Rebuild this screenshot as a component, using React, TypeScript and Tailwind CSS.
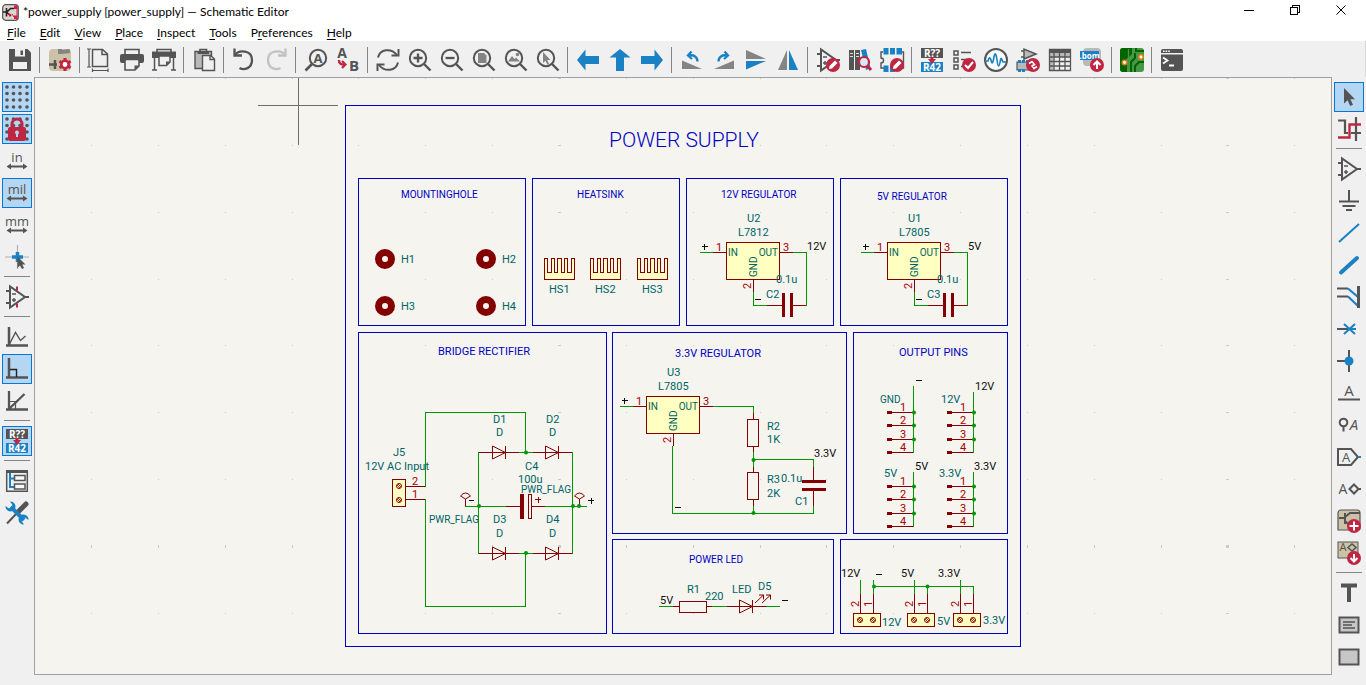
import React from "react";

const K = "#545454";
const B = "#1a81c4";
const R = "#bf2641";
const G = "#848484";

type Item = { name: string; art: React.ReactNode; on?: boolean } | null;

function Icon({ children }: { children: React.ReactNode }) {
  return (
    <svg width="24" height="24" viewBox="0 0 24 24" fill="none" stroke={K} strokeWidth="2" className="shrink-0 overflow-visible" aria-hidden="true">
      {children}
    </svg>
  );
}

const iconFont = "font-['Open_Sans','Noto_Sans',sans-serif] font-bold";

function Glyph({ x, y, size, fill = K, children, light, italic, anchor = "middle" }: { x: number; y: number; size: number; fill?: string; children: string; light?: boolean; italic?: boolean; anchor?: "start" | "middle" }) {
  return (
    <text x={x} y={y} fontSize={size} fill={fill} stroke="none" textAnchor={anchor} fontStyle={italic ? "italic" : "normal"} className={light ? "font-['Open_Sans','Noto_Sans',sans-serif] font-medium" : iconFont}>
      {children}
    </text>
  );
}

function Lens({ children }: { children?: React.ReactNode }) {
  return (
    <>
      <circle cx="10" cy="10" r="8.2" />
      <path d="M16 16L22.5 22.5" strokeWidth="2.4" />
      {children}
    </>
  );
}

function Badge({ children, x = 17, y = 17 }: { children: React.ReactNode; x?: number; y?: number }) {
  return (
    <>
      <circle cx={x} cy={y} r="7" fill={R} stroke="none" />
      <g stroke="#fff" strokeWidth="2" transform={`translate(${x - 17} ${y - 17})`}>{children}</g>
    </>
  );
}

const pencil = <path d="M13 21L13.500 18L19 12.500L21.500 15L16 20.500Z" fill="#fff" stroke="none" />;

const annotate = (
  <>
    <rect x="1" y="0" width="22" height="10" fill={K} stroke="none" />
    <Glyph x={12} y={9} size={10} fill="#fff">R??</Glyph>
    <rect x="1" y="14" width="22" height="10" fill={B} stroke="none" />
    <Glyph x={12} y={23} size={10} fill="#fff">R42</Glyph>
    <path d="M10.5 9h3v2h2.5L12 16L8 11h2.500z" fill={R} stroke="none" />
  </>
);

const opamp = (
  <>
    <path d="M5 1.500V22.500L20 12ZM1 6H5M1 18H5M20 12H24" />
    <path d="M7 9H11M7 15H11M9 13V17" strokeWidth="1.500" />
  </>
);

const dots = [2, 8.5, 15, 22].flatMap((x) => [2, 8.5, 15, 22].map((y) => <circle key={`${x}-${y}`} cx={x} cy={y} r="1.8" fill={K} stroke="none" />));

const unitArrow = (
  <>
    <path d="M4 17.500H20" />
    <path d="M1.500 17.500L6 14.500V20.500ZM22.500 17.500L18 14.500V20.500Z" fill={K} stroke="none" />
  </>
);

const pointer = "M7 3V18.500L10.600 15.300L13.200 21L16 19.700L13.400 14.300H18Z";

const topItems: Item[] = [
  { name: "Save", art: <><path d="M1 1H19.500L23 4.500V23H1Z" fill={K} stroke="none" /><path d="M7 1H17V8.500H7ZM5 14H19V21H5Z" fill="#f0f0f0" stroke="none" /><path d="M12.500 2.500H15V7H12.500Z" fill={K} stroke="none" /></> },
  null,
  { name: "Schematic Setup", art: <><rect x="1" y="1" width="22" height="22" rx="4" fill="#ccc2a6" stroke="none" /><path d="M12 1V6M14 4L22 3" stroke={G} strokeWidth="4" /><path d="M1 16.500H9M7 12V21" strokeWidth="2.500" /><path d="M17 10V23M11.400 13.200L22.600 19.800M22.600 13.200L11.400 19.800" stroke={R} strokeWidth="3" /><circle cx="17" cy="16.500" r="3.700" stroke={R} strokeWidth="2.600" fill="#fff" /></> },
  null,
  { name: "Page Settings", art: <><path d="M4.500 1.500H14.500L19.500 6V18.500H4.500ZM14 2V6.500H19" strokeWidth="1.500" /><path d="M1 1V19M-1 1H3M-1 19H3M4.500 22.500H20M4.500 20.500V24M20 20.500V24" strokeWidth="1.200" /></> },
  { name: "Print", art: <><path d="M5 7V1.500H19V7" strokeWidth="1.600" /><rect x="0" y="6" width="24" height="9" rx="2" fill={K} stroke="none" /><path d="M5 11.500H19V18L15 22H5Z" fill="#f0f0f0" strokeWidth="1.600" /><path d="M19 17.500H14.500V22Z" fill={K} stroke="none" /></> },
  { name: "Plot", art: <><path d="M5 4V1.500H19V4" strokeWidth="1.600" /><path d="M0 3.500H24V10H0Z" fill={K} stroke="none" /><path d="M2.500 9V22M21.500 9V22M0 22H5M19 22H24" strokeWidth="1.500" /><path d="M7 8H18V14L14.500 17.500H7Z" fill="#f0f0f0" strokeWidth="1.500" /><path d="M18 13.500H14V17.500Z" fill={K} stroke="none" /></> },
  null,
  { name: "Paste", art: <><path d="M3 3.500H19.500V20.500H3Z" fill="#b9b9b9" strokeWidth="1.400" /><path d="M8 4V1.500H14.500V4" strokeWidth="1.600" /><path d="M5.500 3H17V6H5.500Z" fill={K} stroke="none" /><path d="M10.500 7.500H18.500L22.500 11V22.500H10.500Z" fill="#f0f0f0" strokeWidth="1.400" /><path d="M18 7.500V11.500H22.500" strokeWidth="1.400" /></> },
  null,
  { name: "Undo", art: <><path d="M3 7C7 1.500 20 2 20 12C20 20.500 12 22.500 7.500 20" strokeWidth="2.300" /><path d="M2.500 0.500V7.500H10" strokeWidth="2.300" /></> },
  { name: "Redo", art: <><path d="M21 7C17 1.500 4 2 4 12C4 20.500 12 22.500 16.500 20" stroke="#c2c2c2" strokeWidth="2.300" /><path d="M21.500 0.500V7.500H14" stroke="#c2c2c2" strokeWidth="2.300" /></> },
  null,
  { name: "Find", art: <><circle cx="14" cy="10" r="8.200" /><path d="M8 16L1.500 22.500" strokeWidth="2.600" /><Glyph x={14} y={15} size={13}>A</Glyph></> },
  { name: "Replace", art: <><Glyph x={6} y={10} size={14}>A</Glyph><Glyph x={18} y={23} size={15}>B</Glyph><path d="M3 12C3 16 5 16.500 8 16.500" stroke={R} strokeWidth="2.500" /><path d="M6 13L9.500 16.500L6 20" stroke={R} strokeWidth="2.200" /></> },
  null,
  { name: "Refresh", art: <><path d="M2 9.500C4 1 15 -0.500 21 7M22 14.500C20 23 9 24.500 3 17" /><path d="M22.500 1V7.500H15.500M1.500 23V16.500H8.500" /></> },
  { name: "Zoom In", art: <Lens><path d="M5.500 10H14.500M10 5.500V14.500" strokeWidth="2.300" /></Lens> },
  { name: "Zoom Out", art: <Lens><path d="M5.500 10H14.500" strokeWidth="2.300" /></Lens> },
  { name: "Zoom to Fit", art: <Lens><path d="M6 5H12L14.500 7.500V15H6Z" fill={G} stroke="none" /></Lens> },
  { name: "Zoom to Objects", art: <Lens><path d="M4 13.500L8 8L10.500 11L12 9.500L16 13.500Z" fill={G} stroke="none" /><circle cx="13.500" cy="6.500" r="1.800" fill={G} stroke="none" /></Lens> },
  { name: "Zoom to Selection", art: <Lens><path d="M7 4V15L9.500 12.800L11.300 16.500L13 15.700L11.300 12H14.500Z" fill={G} stroke="none" /></Lens> },
  null,
  { name: "Navigate Back", art: <path d="M1 12L9.500 1.500V8H23V16H9.500V22.500Z" fill={B} stroke="none" /> },
  { name: "Navigate Up", art: <path d="M12 1L22.500 9.500H16V23H8V9.500H1.500Z" fill={B} stroke="none" /> },
  { name: "Navigate Forward", art: <path d="M23 12L14.500 1.500V8H1V16H14.500V22.500Z" fill={B} stroke="none" /> },
  null,
  { name: "Rotate Counterclockwise", art: <><path d="M2 12.500V21H22Z" fill={G} stroke="none" /><path d="M17.500 13.500C17.500 9 14 6.500 9 7.500" stroke={B} strokeWidth="2.300" /><path d="M11.500 3.500L8 7.500L12 11" stroke={B} strokeWidth="2.300" /></> },
  { name: "Rotate Clockwise", art: <><path d="M22 12.500V21H2Z" fill={G} stroke="none" /><path d="M6.500 13.500C6.500 9 10 6.500 15 7.500" stroke={B} strokeWidth="2.300" /><path d="M12.500 3.500L16 7.500L12 11" stroke={B} strokeWidth="2.300" /></> },
  { name: "Mirror Vertically", art: <><path d="M2 2V11H22Z" fill={G} stroke="none" /><path d="M2 21.500V13H22Z" fill={B} stroke="none" /></> },
  { name: "Mirror Horizontally", art: <><path d="M2 22H11V2Z" fill={G} stroke="none" /><path d="M22 22H13V2Z" fill={B} stroke="none" /></> },
  null,
  { name: "Symbol Editor", art: <>{opamp}<Badge>{pencil}</Badge></> },
  { name: "Symbol Library Browser", art: <><path d="M1 2H6V22H1ZM7 2H12V22H7Z" fill={K} stroke="none" /><path d="M2 5.500H5M2 8.500H5M8 5.500H11M8 8.500H11" stroke="#ddd" strokeWidth="1.200" /><path d="M13 2L18 1L22.500 20L18 22Z" fill={B} stroke="none" /><circle cx="16" cy="14" r="5" fill="#dbe9f4" stroke={R} strokeWidth="2.200" /><path d="M19.500 18L23 22" stroke={R} strokeWidth="3" /></> },
  { name: "Footprint Editor", art: <><path d="M3 4H1V10A2.500 2.500 0 0 1 1 15V20H4M21 4H23.500V20H21" strokeWidth="1.400" /><path d="M3.500 0H8.500V6.500H3.500ZM10 0H15V6.500H10ZM16.500 0H22V6.500H16.500ZM3.500 17.500H8.500V24H3.500ZM10 17.500H15V24H10Z" fill={B} stroke="none" /><Badge>{pencil}</Badge></> },
  null,
  { name: "Annotate Schematic", art: annotate },
  { name: "Electrical Rules Checker", art: <><path d="M2 3H6V7H2ZM2 10H6V14H2ZM2 17H6V21H2ZM9 4.500H19M9 11.500H15M9 18.500H12" strokeWidth="1.500" /><Badge><path d="M13 17L16 20L21 14" /></Badge></> },
  { name: "Simulator", art: <><circle cx="12" cy="12" r="11" fill="#fafafa" /><path d="M1 13H4C5 9 6 9 7 12C8 17 9 15 10 9C11 4 12 5 13 12C14 20 15 20 16.500 12C17.500 8 18 13 19 14H22" stroke={B} strokeWidth="1.600" /></> },
  { name: "Assign Footprints", art: <><path d="M8 1V11L20 6ZM5 3H8M5 9H8" fill="#b9b9b9" strokeWidth="1.500" /><path d="M1 14H14V22H1Z" fill="#b9b9b9" stroke={K} strokeWidth="1.200" /><path d="M2 12H5V15H2ZM6 12H9V15H6ZM10 12H13V15H10ZM2 21H5V24H2ZM6 21H9V24H6Z" fill={B} stroke="none" /><Badge><path d="M13 15.500L16 13.500L18.500 16.500L15.500 18.500M21 18.500L18 20.500L16 17" strokeWidth="1.600" /></Badge></> },
  { name: "Bulk Edit Fields", art: <><path d="M1 1H23V5H1Z" fill={K} stroke="none" /><path d="M1 5H23V9H1ZM1 9H5V23H1Z" fill="#b9b9b9" stroke="none" /><path d="M1.500 1.500H22.500V22.500H1.500ZM1 9H23M1 13.500H23M1 18H23M6 5V22M11.500 5V22M17 5V22" strokeWidth="1.300" /></> },
  { name: "Export BOM", art: <><rect x="3" y="0" width="18" height="18" rx="4" fill="#b9b9b9" stroke="none" /><rect x="0" y="3" width="19" height="9" fill={B} stroke="none" /><Glyph x={9.5} y={10.5} size={8} fill="#fff">.bom</Glyph><Badge><path d="M17 21V14M13.500 17L17 13.500L20.500 17" /></Badge></> },
  null,
  { name: "PCB Editor", art: <><rect x="0" y="0" width="24" height="24" rx="3" fill="#489648" stroke="none" /><path d="M3 0H12V6L7 11V24H3A3 3 0 0 1 0 21V3A3 3 0 0 1 3 0Z" fill="#006400" stroke="none" /><path d="M11 24V14L15 10V5M15 24V18L19 14H24M16 0V3H24" stroke="#006400" strokeWidth="2" /><path d="M4 14.500L8.500 10V1" stroke="#489648" strokeWidth="1.300" /><circle cx="4.500" cy="14.500" r="2.200" fill="#fff" stroke="#e8820e" strokeWidth="1.500" /><circle cx="21" cy="9" r="2.200" fill="#fff" stroke="#e8820e" strokeWidth="1.500" /></> },
  null,
  { name: "Scripting Console", art: <><path d="M1 3A2 2 0 0 1 3 1H21A2 2 0 0 1 23 3V5H1ZM1 6.500H23V21A2 2 0 0 1 21 23H3A2 2 0 0 1 1 21Z" fill={K} stroke="none" /><path d="M3 3.200H10" stroke="#fff" strokeWidth="1.500" strokeDasharray="1.600 1" /><path d="M3 9.500L7.500 12.500L3 15.500M9 17.500H14" stroke="#fff" strokeWidth="1.800" /></> },
];

const leftItems: Item[] = [
  { name: "Show Grid", on: true, art: dots },
  { name: "Grid Overrides", on: true, art: <>{dots}<path d="M7 11V7A5 5 0 0 1 17 7V11" stroke={R} strokeWidth="3" /><rect x="3" y="10" width="18" height="14" rx="2" fill={R} stroke="none" /><circle cx="12" cy="15.500" r="2" fill="#b4d6f2" stroke="none" /><path d="M12 16V20" stroke="#b4d6f2" /></> },
  { name: "Inches", art: <><Glyph x={12} y={13} size={13} light>in</Glyph>{unitArrow}</> },
  { name: "Mils", on: true, art: <><Glyph x={12} y={13} size={13} light>mil</Glyph>{unitArrow}</> },
  { name: "Millimeters", art: <><Glyph x={12} y={13} size={13} light>mm</Glyph>{unitArrow}</> },
  { name: "Full-Window Crosshairs", art: <><path d="M0 12H24M12.500 0V24" stroke="#b0b0b0" strokeWidth="1.200" /><path d="M7 12H18M12.500 7V17" stroke={B} strokeWidth="3.500" /><path d="M12.500 11.500V23L15 20.500L17 24L19 23L17.300 19.500H20.500Z" fill={K} stroke="none" /></> },
  null,
  { name: "Show Hidden Pins", art: <>{opamp}<path d="M12 1.500V5.500M12 18.500V22.500" stroke={R} strokeWidth="2" /></> },
  null,
  { name: "Free Angle Lines", art: <><path d="M4 2V21.500M1 20.500H23" strokeWidth="2.500" /><path d="M4 20L10.500 7.500L15.500 15.500L20.500 11" strokeWidth="1.400" /></> },
  { name: "Right Angle Lines", on: true, art: <><path d="M4 1V21.500M1 20.500H23" strokeWidth="2.500" /><path d="M5 12.500H11.500V20" stroke="#222" strokeWidth="1.400" /></> },
  { name: "45 Degree Lines", art: <><path d="M4 2V21.500M1 20.500H23M4 20L19.500 5" strokeWidth="2.300" /><path d="M5 12.500H10.500V20" strokeWidth="1.200" /></> },
  null,
  { name: "Annotate Automatically", on: true, art: annotate },
  null,
  { name: "Hierarchy Navigator", art: <><path d="M1 1H23V4H1Z" fill={K} stroke="none" /><path d="M1.700 2V22.300H22.300V2" strokeWidth="1.500" /><path d="M5 4V18H9M5 9.500H9" stroke={B} /><path d="M9.500 6.500H20V11.500H9.500ZM9.500 15H20V20H9.500Z" strokeWidth="1.500" fill="#f8f8f8" /></> },
  { name: "Properties Manager", art: <><path d="M2 22.500L13 11" strokeWidth="2" /><path d="M14 10L21 3" strokeWidth="5" strokeLinecap="round" /><path d="M6 6L19 19" stroke={B} strokeWidth="4" /><path d="M5 0.500A5 5 0 1 1 0.500 5L4 7.500L7.500 4ZM19 23.500A5 5 0 1 1 23.500 19L20 16.500L16.500 20Z" fill={B} stroke="none" /></> },
];

const sheet = <path d="M1 4A3 3 0 0 1 4 1H20A3 3 0 0 1 23 4V19A2 2 0 0 1 21 21H1Z" fill="#ccc2a6" strokeWidth="1.200" />;

const rightItems: Item[] = [
  { name: "Select", on: true, art: <path d={pointer} fill={K} stroke="none" /> },
  { name: "Highlight Nets", art: <><path d="M1 3.500H8V16H11M19 0V24M14 16H24" strokeWidth="2.200" /><path d="M1 20.500H12.500V7.500H24" stroke={R} strokeWidth="2.400" /></> },
  null,
  { name: "Place Symbols", art: opamp },
  { name: "Place Power", art: <><path d="M12 1V12" /><path d="M2 12.500H22M5.500 17H18.500M9 21H15" /></> },
  { name: "Draw Wires", art: <path d="M2 21L22 3" stroke={B} /> },
  { name: "Draw Buses", art: <path d="M4 19.500L20 5" stroke={B} strokeWidth="4" strokeLinecap="round" /> },
  { name: "Wire to Bus Entries", art: <><path d="M0 3.500H11M0 11.500H11" /><path d="M11 3.500L21 12M11 11.500L21 21" stroke={B} strokeWidth="2.200" /><path d="M21.500 1V23" strokeWidth="3" /></> },
  { name: "No-Connect Flags", art: <><path d="M0 12H12" /><path d="M7 7L18 17M7 17L18 7M12 12H19" stroke={B} strokeWidth="2" /></> },
  { name: "Junctions", art: <><path d="M0 12H12M12 1V23" /><circle cx="12" cy="12" r="4.500" fill={B} stroke="none" /></> },
  { name: "Net Labels", art: <><Glyph x={12} y={15} size={15} light>A</Glyph><path d="M1 18.500H23" /></> },
  { name: "Net Class Directives", art: <><circle cx="6.500" cy="9.500" r="3.800" /><path d="M6.500 13V18.500" /><Glyph x={17} y={17} size={15} light italic>A</Glyph></> },
  { name: "Global Labels", art: <><path d="M1 4H14L21 12L14 20H1Z" /><path d="M21 12H24" stroke={B} /><Glyph x={9} y={17} size={13} light>A</Glyph></> },
  { name: "Hierarchical Labels", art: <><Glyph x={6} y={17} size={14} light>A</Glyph><path d="M12.500 12L17 7.500L21.500 12L17 16.500ZM21.500 12H24" /></> },
  { name: "Draw Sheets", art: <>{sheet}<path d="M2 9H7M8 4V15M8 8L13 4H23M8 12L12 16" /><Badge><path d="M17 12.500V21.500M12.500 17H21.500" /></Badge></> },
  { name: "Import Sheet Pins", art: <><rect x="1" y="1" width="20" height="16" fill="#ccc2a6" strokeWidth="1" /><Glyph x={6} y={10} size={11} light>A</Glyph><path d="M11 6.500L15 3L19 6.500L15 10Z" strokeWidth="1.600" /><Badge><path d="M17 13V20M13.500 17L17 20.500L20.500 17" /></Badge></> },
  null,
  { name: "Text", art: <path d="M4 4.500H20M12 4V21" strokeWidth="4" /> },
  { name: "Text Boxes", art: <><rect x="2.500" y="4.500" width="19" height="15" fill="#c6c6c6" /><path d="M6 9H18M6 12H15M6 15H18" strokeWidth="1.300" /></> },
  { name: "Rectangles", art: <rect x="2.500" y="4.500" width="19" height="15" fill="#c6c6c6" /> },
];

function SideBar({ items, label }: { items: Item[]; label: string }) {
  return (
    <aside aria-label={label} className="flex w-[34px] shrink-0 flex-col items-center bg-[#f0f0f0] pt-1">
      {items.map((it, i) =>
        it ? (
          <div key={i} className="flex h-8 shrink-0 items-center">
            <button type="button" aria-label={it.name} aria-pressed={!!it.on} className={it.on ? "flex size-[30px] items-center justify-center border border-[#0078d7] bg-[#b4d6f2]" : "flex size-[30px] items-center justify-center"}>
              <Icon>{it.art}</Icon>
            </button>
          </div>
        ) : (
          <div key={i} className="flex h-2 w-[26px] shrink-0 items-start pt-[3px]">
            <div className="h-px w-full bg-[#848484]" />
          </div>
        ),
      )}
    </aside>
  );
}

const TEAL = "#006464";
const PIN = "#a90000";
const INK = "#0f0f0f";
const BLUE = "#0000c2";
const WIRE = "#009600";
const PART = "#840000";
const BODY = "#ffffc2";

function T({ x, y, c = TEAL, s = 11, rot, end, children }: { x: number; y: number; c?: string; s?: number; rot?: boolean; end?: boolean; children: string }) {
  return (
    <text x={x} y={y} fill={c} fontSize={s} textAnchor={end ? "end" : "start"} transform={rot ? `rotate(-90 ${x} ${y})` : undefined}>
      {children}
    </text>
  );
}

const Wire = ({ d }: { d: string }) => <path d={d} stroke={WIRE} fill="none" shapeRendering="crispEdges" />;
const Part = ({ d }: { d: string }) => <path d={d} stroke={PART} fill="none" shapeRendering="crispEdges" />;
const Dot = ({ x, y }: { x: number; y: number }) => <circle cx={x} cy={y} r="2" fill={WIRE} />;
const Ink = ({ d }: { d: string }) => <path d={d} stroke={INK} fill="none" shapeRendering="crispEdges" />;
const Frame = ({ x, y, w, h }: { x: number; y: number; w: number; h: number }) => (
  <rect x={x + 0.5} y={y + 0.5} width={w} height={h} stroke={BLUE} fill="none" shapeRendering="crispEdges" />
);

function Regulator({ x, y, name, part }: { x: number; y: number; name: string; part: string }) {
  return (
    <g transform={`translate(${x} ${y})`}>
      <rect x="0.500" y="0.500" width="53" height="37" fill={BODY} stroke={PART} shapeRendering="crispEdges" />
      <Wire d="M-26 10.500H-13" />
      <Part d="M-13 10.500H0M54 10.500H67M27.500 38V50" />
      <Ink d="M-24 4.500H-18M-21.500 2V8" />
      <T x={-10} y={9} c={PIN}>1</T>
      <T x={57} y={9} c={PIN}>3</T>
      <T x={25} y={47} c={PIN} rot>2</T>
      <T x={2} y={14} s={10}>IN</T>
      <T x={52} y={14} s={10} end>OUT</T>
      <T x={31} y={35} s={10} rot>GND</T>
      <T x={21} y={-20}>{name}</T>
      <T x={12} y={-6}>{part}</T>
    </g>
  );
}

function RegulatorTail({ x, cap, net }: { x: number; cap: string; net: string }) {
  return (
    <g transform={`translate(${x} 0)`}>
      <Wire d="M67 252.500H80.500V305.500M27.500 292V305.500H41" />
      <Part d="M41 305.500H56M67 305.500H80" />
      <rect x="56" y="293" width="3" height="24" fill={PART} />
      <rect x="64" y="293" width="3" height="24" fill={PART} />
      <Ink d="M29 299.500H35" />
      <T x={50} y={283}>0.1u</T>
      <T x={40} y={298}>{cap}</T>
      <T x={81} y={250} c={INK}>{net}</T>
    </g>
  );
}

function Header({ x, y, top }: { x: number; y: number; top: number }) {
  return (
    <g>
      {[0, 13, 27, 40].map((dy, i) => (
        <g key={dy}>
          <Part d={`M${x - 26} ${y + dy + 0.5}H${x}`} />
          <rect x={x - 26} y={y + dy - 1} width="5" height="3" fill={PART} />
          <T x={x - 13} y={y + dy - 1} c={PIN}>{String(i + 1)}</T>
        </g>
      ))}
      <Wire d={`M${x + 0.5} ${top}V${y + 41}`} />
      {[0, 13, 27].map((dy) => <Dot key={dy} x={x + 1} y={y + dy + 0.5} />)}
    </g>
  );
}

function Screw({ x, y }: { x: number; y: number }) {
  return (
    <g stroke={PART} fill="none">
      <circle cx={x} cy={y} r="2.500" />
      <path d={`M${x - 2} ${y - 1}L${x + 1} ${y + 2}M${x - 1} ${y - 2}L${x + 2} ${y + 1}`} strokeWidth="0.800" />
    </g>
  );
}

function Terminal({ x }: { x: number }) {
  return (
    <g>
      <rect x={x + 0.5} y="613.500" width="27" height="13" fill={BODY} stroke={PART} shapeRendering="crispEdges" />
      <Screw x={x + 7} y={620} />
      <Screw x={x + 20} y={620} />
      <Part d={`M${x + 7.5} 594V613M${x + 20.5} 594V613`} />
      <T x={x + 6} y={607} c={PIN} rot>2</T>
      <T x={x + 19} y={607} c={PIN} rot>1</T>
    </g>
  );
}

function Diode({ x, y }: { x: number; y: number }) {
  return (
    <g stroke={PART} fill="none">
      <path d={`M${x + 0.5} ${y - 6}V${y + 7}L${x + 13.5} ${y + 0.5}Z`} />
      <path d={`M${x + 13.5} ${y - 6}V${y + 7}M${x} ${y + 0.5}H${x + 14}`} shapeRendering="crispEdges" />
    </g>
  );
}

const Resistor = ({ x, y }: { x: number; y: number }) => <rect x={x + 0.5} y={y + 0.5} width="11" height="27" fill="none" stroke={PART} shapeRendering="crispEdges" />;
const Flag = ({ x, y }: { x: number; y: number }) => <path d={`M${x} ${y}V${y - 7}L${x - 5} ${y - 10}Q${x} ${y - 16} ${x + 5} ${y - 10}L${x} ${y - 7}`} fill="none" stroke={PART} />;

const gridX = Array.from({ length: 19 }, (_, i) => Math.round(91.5 + i * 66.85 - 0.5));
const gridY = Array.from({ length: 9 }, (_, i) => Math.round(78 + i * 66.85));

function Schematic() {
  return (
    <svg role="img" aria-label="Power supply schematic" className="block h-full w-full font-['Roboto','Liberation_Sans',sans-serif]">
      <g transform="translate(-35 -78)">
        {gridX.flatMap((x, i) =>
          gridY.map((y, j) => (
            <rect key={`${i}-${j}`} x={i % 10 === 7 ? x - 1 : x} y={j === 7 ? y - 1 : y} width={i % 10 === 7 ? 3 : 1} height={j === 7 ? 3 : 1} fill="#cbcac6" />
          )),
        )}
        <path d="M258 105.500H338M298.500 78V145" stroke="#6e6e6c" shapeRendering="crispEdges" />

        <Frame x={345} y={105} w={675} h={541} />
        <Frame x={358} y={178} w={167} h={147} />
        <Frame x={532} y={178} w={147} h={147} />
        <Frame x={686} y={178} w={147} h={147} />
        <Frame x={840} y={178} w={167} h={147} />
        <Frame x={358} y={332} w={248} h={301} />
        <Frame x={612} y={332} w={234} h={201} />
        <Frame x={853} y={332} w={154} h={201} />
        <Frame x={612} y={539} w={221} h={94} />
        <Frame x={840} y={539} w={167} h={94} />

        <text x="609" y="147" fontSize="21" fill={BLUE} className="font-light">POWER SUPPLY</text>
        <T x={401} y={198} c={BLUE} s={10}>MOUNTINGHOLE</T>
        <T x={577} y={198} c={BLUE} s={10}>HEATSINK</T>
        <T x={721} y={198} c={BLUE} s={10}>12V REGULATOR</T>
        <T x={877} y={200} c={BLUE} s={10}>5V REGULATOR</T>
        <T x={438} y={355} c={BLUE} s={11}>BRIDGE RECTIFIER</T>
        <T x={675} y={357} c={BLUE} s={11}>3.3V REGULATOR</T>
        <T x={899} y={356} c={BLUE} s={11}>OUTPUT PINS</T>
        <T x={689} y={563} c={BLUE} s={10}>POWER LED</T>

        {[[385, 259, "H1"], [486, 259, "H2"], [385, 306, "H3"], [486, 306, "H4"]].map(([x, y, n]) => (
          <g key={n}>
            <circle cx={x} cy={y} r="6.500" fill="none" stroke={PART} strokeWidth="7" />
            <T x={Number(x) + 16} y={Number(y) + 4}>{String(n)}</T>
          </g>
        ))}
        {[544, 590, 637].map((x, i) => (
          <g key={x}>
            <path d={`M${x + 0.5} 258.500h3v14h4v-14h3v14h3v-14h4v14h3v-14h3v14h4v-14h3v21h-30z`} fill={BODY} stroke={PART} shapeRendering="crispEdges" />
            <T x={x + 5} y={293}>{`HS${i + 1}`}</T>
          </g>
        ))}

        <Regulator x={726} y={242} name="U2" part="L7812" />
        <RegulatorTail x={726} cap="C2" net="12V" />
        <Regulator x={887} y={242} name="U1" part="L7805" />
        <RegulatorTail x={887} cap="C3" net="5V" />

        <Wire d="M425.500 487V412.500H525.500V452.500M425.500 499V606.500H525.500V553.500M478.500 452V554M572.500 452V554M519 452.500H533M519 553.500H533M465 506.500H506M545 506.500H587" />
        <Part d="M406 486.500H425M406 499.500H425M479 452.500H519M533 452.500H572M479 553.500H519M533 553.500H572M506 506.500H520M532 506.500H545M535 499.500H541M538.500 497V503" />
        <rect x="392.500" y="479.500" width="13" height="27" fill={BODY} stroke={PART} shapeRendering="crispEdges" />
        <Screw x={399} y={486} />
        <Screw x={399} y={500} />
        <Diode x={492} y={452} />
        <Diode x={545} y={452} />
        <Diode x={492} y={553} />
        <Diode x={545} y={553} />
        <rect x="520" y="494" width="4" height="25" fill={PART} />
        <rect x="528.500" y="494.500" width="3" height="24" fill="#f5f4ef" stroke={PART} shapeRendering="crispEdges" />
        <Flag x={465.5} y={506} />
        <Flag x={579.5} y={506} />
        <Dot x={526} y={452.5} />
        <Dot x={526} y={553} />
        <Dot x={479} y={506} />
        <Dot x={573} y={506} />
        <Dot x={579} y={506} />
        <Ink d="M469 500.500H474M588 500.500H594M591.500 498V504" />
        <T x={393} y={456}>J5</T>
        <T x={365} y={470}>12V AC Input</T>
        <T x={412} y={485} c={PIN}>2</T>
        <T x={412} y={498} c={PIN}>1</T>
        <T x={493} y={423}>D1</T>
        <T x={496} y={436}>D</T>
        <T x={546} y={423}>D2</T>
        <T x={549} y={436}>D</T>
        <T x={525} y={470}>C4</T>
        <T x={518} y={483}>100u</T>
        <T x={521} y={493} s={10}>PWR_FLAG</T>
        <T x={429} y={523} s={10}>PWR_FLAG</T>
        <T x={493} y={523}>D3</T>
        <T x={496} y={537}>D</T>
        <T x={546} y={523}>D4</T>
        <T x={549} y={537}>D</T>

        <Regulator x={646} y={396} name="U3" part="L7805" />
        <Wire d="M713 406.500H753.500V413M753.500 452V467M753.500 459.500H813.500V467M753.500 506V513.500M813.500 506V513.500H672.500V446" />
        <Part d="M753.500 413V419M753.500 447V452M753.500 467V472M753.500 500V506M813.500 467V480M813.500 491V506" />
        <Resistor x={747} y={419} />
        <Resistor x={747} y={472} />
        <rect x="802" y="480" width="24" height="3" fill={PART} />
        <rect x="802" y="488" width="24" height="3" fill={PART} />
        <Dot x={753.5} y={460} />
        <Dot x={753.5} y={513} />
        <Ink d="M675 507.500H681" />
        <T x={767} y={430}>R2</T>
        <T x={767} y={443}>1K</T>
        <T x={767} y={483}>R3</T>
        <T x={767} y={497}>2K</T>
        <T x={781} y={482}>0.1u</T>
        <T x={795} y={505}>C1</T>
        <T x={814} y={457} c={INK}>3.3V</T>

        <Wire d="M659 606.500H673M712 606.500H727M766 606.500H780" />
        <Part d="M673 606.500H679M707 606.500H712M727 606.500H766" />
        <rect x="679.500" y="601.500" width="27" height="11" fill="none" stroke={PART} shapeRendering="crispEdges" />
        <Diode x={739} y={606} />
        <path d="M755 603L763.500 595M759 595H763.500V599.500M762 603L770.500 595M766 595H770.500V599.500" stroke={PART} fill="none" />
        <Ink d="M782 600.500H788" />
        <T x={687} y={593}>R1</T>
        <T x={705} y={600}>220</T>
        <T x={732} y={593}>LED</T>
        <T x={758} y={590}>D5</T>
        <T x={660} y={604} c={INK}>5V</T>

        <Header x={913} y={412} top={386} />
        <Header x={973} y={412} top={392} />
        <Header x={913} y={486} top={472} />
        <Header x={973} y={486} top={472} />
        <Ink d="M916 380.500H922" />
        <T x={880} y={403} s={10}>GND</T>
        <T x={941} y={403}>12V</T>
        <T x={884} y={477}>5V</T>
        <T x={939} y={477}>3.3V</T>
        <T x={975} y={390} c={INK}>12V</T>
        <T x={915} y={470} c={INK}>5V</T>
        <T x={974} y={470} c={INK}>3.3V</T>

        <Terminal x={853} />
        <Terminal x={907} />
        <Terminal x={953} />
        <Wire d="M860.500 580V594M873.500 580V594M914.500 580V594M927.500 586V594M960.500 580V594M873 586.500H973.500V594" />
        <Dot x={874} y={586.5} />
        <Dot x={927.5} y={586.5} />
        <Ink d="M876 574.500H882" />
        <T x={841} y={577} c={INK}>12V</T>
        <T x={901} y={577} c={INK}>5V</T>
        <T x={938} y={577} c={INK}>3.3V</T>
        <T x={882} y={626}>12V</T>
        <T x={937} y={625}>5V</T>
        <T x={983} y={624}>3.3V</T>
      </g>
    </svg>
  );
}

const menus = [["", "F", "ile"], ["", "E", "dit"], ["", "V", "iew"], ["", "P", "lace"], ["", "I", "nspect"], ["", "T", "ools"], ["P", "r", "eferences"], ["", "H", "elp"]];

export default function App() {
  return (
    <div className="flex h-screen flex-col overflow-hidden bg-white font-['Lato','Open_Sans',sans-serif] text-[12px] leading-4 text-black">
      <header className="flex h-6 shrink-0 items-start pr-0.5">
        <div className="flex h-6 flex-1 items-center gap-1 pl-0.5">
          <svg width="17" height="17" viewBox="0 0 17 17" fill="none" aria-hidden="true">
            <rect x="0.700" y="0.700" width="15.600" height="15.600" rx="3" fill="#dcd5cc" stroke="#555" strokeWidth="1.200" />
            <path d="M1 8H4M4.500 4V12.500M5 8L8.500 4.500H12M5 8.500L9 12" stroke="#222" strokeWidth="1.600" />
            <path d="M10 10L12 13H15V3" stroke={R} strokeWidth="1" />
            <path d="M12 1.500H15.500V5H12ZM12 11.500H15.500V15H12ZM6 9.500L9.500 10L7.500 13Z" fill="#e0184f" />
          </svg>
          <h1>*power_supply [power_supply] — Schematic Editor</h1>
        </div>
        <div className="flex">
          {[
            ["Minimize", <path key="m" d="M0 5.500H10" />],
            ["Restore", <path key="r" d="M0.500 2.500H7.500V9.500H0.500ZM2.500 2V0.500H9.500V7.500H8" />],
            ["Close", <path key="c" d="M0.500 0.500L9.500 9.500M9.500 0.500L0.500 9.500" shapeRendering="auto" />],
          ].map(([name, art]) => (
            <button key={name as string} type="button" aria-label={name as string} className="flex h-5 w-[46px] items-center justify-center">
              <svg width="10" height="10" viewBox="0 0 10 10" fill="none" stroke="#000" shapeRendering="crispEdges" aria-hidden="true">{art}</svg>
            </button>
          ))}
        </div>
      </header>
      <nav className="flex h-[17px] shrink-0 items-center gap-[14px] pl-[7px]">
        {menus.map(([a, b, c]) => (
          <button key={b} type="button" className="whitespace-nowrap">
            {a}<span className="underline underline-offset-2">{b}</span>{c}
          </button>
        ))}
      </nav>
      <div role="toolbar" aria-label="Main toolbar" className="flex h-9 shrink-0 items-center border-r border-[#d8d8d8] bg-[#f0f0f0] pt-0.5 pl-1">
        {topItems.map((it, i) =>
          it ? (
            <button key={i} type="button" aria-label={it.name} className="flex size-8 shrink-0 items-center justify-center">
              <Icon>{it.art}</Icon>
            </button>
          ) : (
            <div key={i} className="flex w-2 shrink-0 pl-[3px]">
              <div className="h-[26px] w-px bg-[#848484]" />
            </div>
          ),
        )}
      </div>
      <div className="flex min-h-0 flex-1">
        <SideBar items={leftItems} label="Display options" />
        <main className="min-w-0 flex-1 border border-[#a0a0a0] bg-[#f5f4ef]">
          <Schematic />
        </main>
        <SideBar items={rightItems} label="Drawing tools" />
      </div>
      <footer className="h-2.5 shrink-0 bg-[#f0f0f0]" />
    </div>
  );
}
